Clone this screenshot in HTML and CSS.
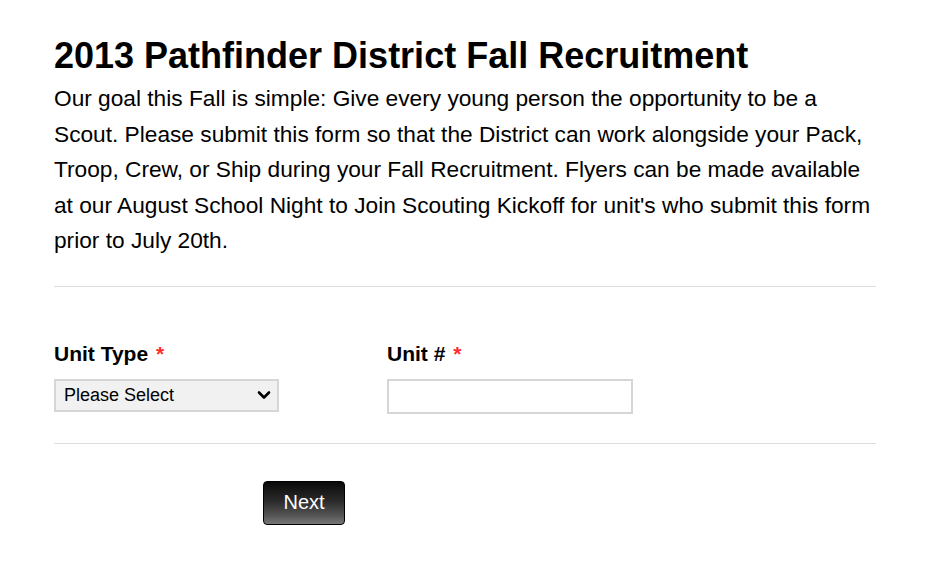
FILE: index.html
```html
<!DOCTYPE html>
<html lang="en">
<head>
    <meta charset="UTF-8">
    <title>2013 Pathfinder District Fall Recruitment</title>
    <link rel="stylesheet" href="styles.css">
</head>
<body>

<main class="form-all">
    <div class="form-header">
        <h1>2013 Pathfinder District Fall Recruitment</h1>
        <p>Our goal this Fall is simple: Give every young person the opportunity to be a Scout. Please submit this form so that the District can work alongside your Pack, Troop, Crew, or Ship during your Fall Recruitment. Flyers can be made available at our August School Night to Join Scouting Kickoff for unit's who submit this form prior to July 20th.</p>
    </div>

    <div class="form-row">
        <div class="form-field">
            <label for="unit-type">Unit Type <span class="required">*</span></label>
            <select id="unit-type" class="unit-select">
                <option>Please Select</option>
                <option>Pack</option>
                <option>Troop</option>
                <option>Crew</option>
                <option>Ship</option>
            </select>
        </div>
        <div class="form-field">
            <label for="unit-number">Unit # <span class="required">*</span></label>
            <input type="text" id="unit-number" class="unit-input">
        </div>
    </div>

    <div class="form-buttons">
        <button class="next-button">Next</button>
    </div>
</main>

</body>
</html>
```

FILE: styles.css
```css
/* Общие стили */
html, body {
    margin: 0;
    padding: 0;
    background-color: #ffffff;
    color: #000000;
    font-family: 'Liberation Sans', Arial, sans-serif;
}

.form-all {
    width: 822px;
    padding: 0 54px;
}

.form-header {
    padding-top: 36px;
    padding-bottom: 27px;
    border-bottom: 1px solid #dddddd;
}

.form-header h1 {
    margin: 0;
    font-size: 36px;
    line-height: 40px;
    font-weight: bold;
}

.form-header p {
    margin: 5px 0 0 0;
    font-size: 22.7px;
    line-height: 35.5px;
}

/* Поля формы */
.form-row {
    display: flex;
    padding-top: 55px;
    padding-bottom: 29px;
    border-bottom: 1px solid #dddddd;
}

.form-field {
    width: 333px;
    display: flex;
    flex-direction: column;
    align-items: flex-start;
}

.form-field label {
    font-size: 21px;
    font-weight: bold;
    line-height: 24px;
    margin-bottom: 13px;
}

.required {
    color: #ff2a2a;
    margin-left: 2px;
}

.unit-select {
    appearance: none;
    -webkit-appearance: none;
    width: 225px;
    height: 33px;
    box-sizing: border-box;
    font-family: 'Liberation Sans', Arial, sans-serif;
    font-size: 18px;
    color: #000000;
    background-color: #f1f1f1;
    background-image: url("data:image/svg+xml,%3Csvg xmlns='http://www.w3.org/2000/svg' width='14' height='10' viewBox='0 0 14 10'%3E%3Cpath d='M2 2.5 L7 7.5 L12 2.5' fill='none' stroke='%23000' stroke-width='2.6' stroke-linecap='round' stroke-linejoin='round'/%3E%3C/svg%3E");
    background-repeat: no-repeat;
    background-position: right 6px center;
    border: 2px solid #d6d6d6;
    border-radius: 0;
    padding: 0 24px 0 8px;
}

.unit-input {
    width: 246px;
    height: 35px;
    box-sizing: border-box;
    border: 2px solid #d6d6d6;
    border-radius: 0;
    font-size: 18px;
}

/* Кнопка */
.form-buttons {
    padding-top: 37px;
    padding-left: 209px;
}

.next-button {
    width: 82px;
    height: 44px;
    font-family: 'Liberation Sans', Arial, sans-serif;
    font-size: 20px;
    color: #ffffff;
    border: 1px solid #000000;
    border-radius: 4px;
    background: linear-gradient(to bottom, #0a0a0a 0%, #2a2a2a 45%, #555555 80%, #777777 100%);
    cursor: pointer;
}
```
